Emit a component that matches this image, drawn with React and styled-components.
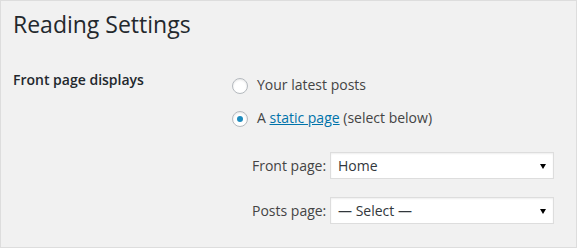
import React from "react";
import styled, { createGlobalStyle } from "styled-components";

const GlobalStyle = createGlobalStyle`
  html, body {
    margin: 0;
    padding: 0;
    background: #f1f1f1;
  }
  body {
    font-family: "Open Sans", "Liberation Sans", sans-serif;
    color: #444;
  }
`;

const Frame = styled.div`
  box-sizing: border-box;
  width: 577px;
  height: 248px;
  border: 1px solid #ddd;
  background: #f1f1f1;
  padding: 9px 12px 0 12px;
`;

const Title = styled.h1`
  margin: 0;
  font-size: 23px;
  line-height: 29px;
  font-weight: 400;
  color: #23282d;
`;

const FormRow = styled.div`
  display: flex;
  margin-top: 32px;
`;

const RowHead = styled.div`
  width: 219px;
  flex-shrink: 0;
  font-size: 14px;
  line-height: 18px;
  font-weight: 600;
  color: #23282d;
`;

const RowBody = styled.div`
  display: flex;
  flex-direction: column;
  padding-top: 4px;
`;

const Option = styled.label`
  display: flex;
  align-items: center;
  gap: 9px;
  height: 20px;
  font-size: 14px;
  line-height: 20px;
  color: #444;
  margin-bottom: 13px;
`;

const Radio = styled.span`
  box-sizing: border-box;
  width: 16px;
  height: 16px;
  border-radius: 50%;
  border: 1px solid #b4b9be;
  background: #fff;
  box-shadow: inset 0 1px 2px rgba(0, 0, 0, 0.1);
  display: flex;
  align-items: center;
  justify-content: center;
  margin-top: 1px;

  &::before {
    content: "";
    width: 6px;
    height: 6px;
    border-radius: 50%;
    background: ${(p) => (p.checked ? "#1e8cbe" : "transparent")};
  }
`;

const Link = styled.a`
  color: #0073aa;
  text-decoration: underline;
`;

const PageSelects = styled.div`
  display: flex;
  flex-direction: column;
  gap: 18px;
  padding-left: 20px;
  margin-top: 11px;
`;

const SelectRow = styled.div`
  display: flex;
  align-items: center;
`;

const SelectLabel = styled.span`
  width: 78px;
  font-size: 14px;
  color: #444;
`;

const SelectBox = styled.div`
  box-sizing: border-box;
  width: 224px;
  height: 27px;
  border: 1px solid #ddd;
  background: #fff;
  box-shadow: inset 0 1px 2px rgba(0, 0, 0, 0.07);
  display: flex;
  align-items: center;
  justify-content: space-between;
  padding: 0 7px 0 7px;
  font-size: 14px;
  color: #32373c;
`;

const Arrow = styled.span`
  width: 0;
  height: 0;
  border-left: 3.5px solid transparent;
  border-right: 3.5px solid transparent;
  border-top: 5px solid #000;
  margin-top: 1px;
`;

function PageSelect({ label, value }) {
  return (
    <SelectRow>
      <SelectLabel>{label}</SelectLabel>
      <SelectBox>
        <span>{value}</span>
        <Arrow />
      </SelectBox>
    </SelectRow>
  );
}

export default function App() {
  return (
    <>
      <GlobalStyle />
      <Frame>
        <Title>Reading Settings</Title>
        <FormRow>
          <RowHead>Front page displays</RowHead>
          <RowBody>
            <Option>
              <Radio />
              <span>Your latest posts</span>
            </Option>
            <Option>
              <Radio checked />
              <span>
                A <Link href="#">static page</Link> (select below)
              </span>
            </Option>
            <PageSelects>
              <PageSelect label="Front page:" value="Home" />
              <PageSelect label="Posts page:" value="— Select —" />
            </PageSelects>
          </RowBody>
        </FormRow>
      </Frame>
    </>
  );
}
